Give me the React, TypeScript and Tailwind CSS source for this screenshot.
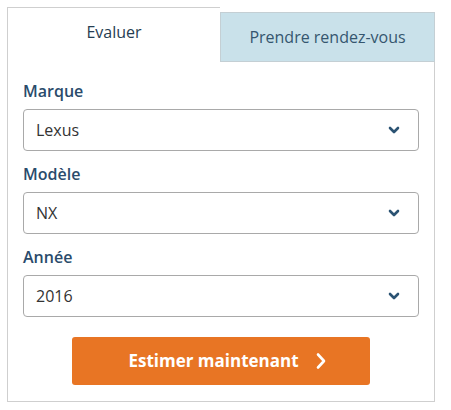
import React from "react";

function Chevron() {
  return (
    <svg width="12" height="8" viewBox="0 0 12 8" className="absolute right-[18px] top-1/2 -translate-y-1/2">
      <path d="M2 2 L6 6 L10 2" fill="none" stroke="#2b5373" strokeWidth="2.6" strokeLinecap="round" strokeLinejoin="round" />
    </svg>
  );
}

function Field({ label, value }: { label: string; value: string }) {
  return (
    <div className="flex flex-col">
      <div className="text-[16px] leading-[24px] font-semibold text-[#2a4b6b]">{label}</div>
      <div className="relative mt-[6px] h-[42px] border border-[#a9a9a9] rounded-[4px] bg-white flex items-center pl-[12px] text-[16px] text-[#333333]">
        {value}
        <Chevron />
      </div>
    </div>
  );
}

export default function App() {
  return (
    <div className="pl-[7px] pt-[7px] bg-white min-h-[410px]" style={{ fontFamily: '"Open Sans", "Noto Sans", sans-serif' }}>
      <div className="w-[428px]">
        <div className="flex h-[55px]">
          <div className="w-[213px] border-l border-t border-[#cfcfcf] bg-white flex justify-center pt-[12px] text-[16px] leading-[24px] text-[#263d52]">
            Evaluer
          </div>
          <div className="w-[215px] mt-[5px] h-[50px] border border-[#c4cfd4] bg-[#c9e1ea] flex items-center justify-center text-[16px] leading-[24px] text-[#35566f]">
            Prendre rendez-vous
          </div>
        </div>
        <div className="border-l border-r border-b border-[#cfcfcf] px-[15px] pt-[17px] pb-[16px] flex flex-col">
          <Field label="Marque" value="Lexus" />
          <div className="mt-[11px]">
            <Field label="Modèle" value="NX" />
          </div>
          <div className="mt-[11px]">
            <Field label="Année" value="2016" />
          </div>
          <div className="mt-[20px] flex justify-center">
            <div className="w-[298px] h-[48px] bg-[#e87524] rounded-[3px] flex items-center justify-center gap-[16px] pl-[13px] text-white text-[17px] font-bold">
              <span>Estimer maintenant</span>
              <svg width="12" height="18" viewBox="0 0 12 18">
                <path d="M3 2.5 L9 9 L3 15.5" fill="none" stroke="#ffffff" strokeWidth="2.6" strokeLinecap="round" strokeLinejoin="round" />
              </svg>
            </div>
          </div>
        </div>
      </div>
    </div>
  );
}
